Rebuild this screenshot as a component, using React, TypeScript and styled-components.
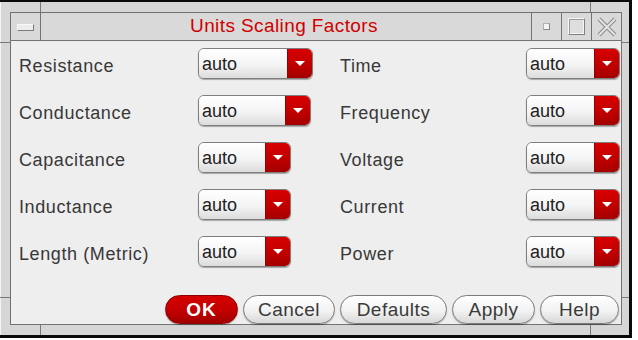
import React from 'react';
import styled, { createGlobalStyle } from 'styled-components';

const GlobalStyle = createGlobalStyle`
  html, body {
    margin: 0;
    padding: 0;
    background: #ffffff;
  }
  body {
    font-family: "Liberation Sans", Arial, sans-serif;
  }
`;

const Window = styled.div`
  position: relative;
  box-sizing: border-box;
  width: 632px;
  height: 338px;
  padding: 10px 7px 10px 10px;
  background: #d6d6d6;
  border-top: 2px solid #0a0a0a;
  border-right: 3px solid #0a0a0a;
  border-bottom: 3px solid #0a0a0a;
  box-shadow: inset 1px 0 0 #f4f4f4;
`;

// resize handle separators on the window frame
const Tick = styled.span<{ $side: 'top' | 'bottom' | 'left' | 'right'; $at: number }>`
  position: absolute;
  background: #7a7a7a;
  ${({ $side, $at }) =>
    $side === 'top'
      ? `top: 0; left: ${$at}px; width: 1px; height: 10px;`
      : $side === 'bottom'
      ? `bottom: 0; left: ${$at}px; width: 1px; height: 10px;`
      : $side === 'left'
      ? `left: 0; top: ${$at}px; width: 10px; height: 1px;`
      : `right: 0; top: ${$at}px; width: 7px; height: 1px;`}
`;

const Inner = styled.div`
  box-sizing: border-box;
  height: 100%;
  display: flex;
  flex-direction: column;
  border: 1px solid #727272;
`;

const TitleBar = styled.div`
  display: flex;
  height: 27px;
  background: #d9d9d9;
  border-bottom: 1px solid #727272;
`;

const MenuBox = styled.div`
  width: 29px;
  display: flex;
  align-items: center;
  justify-content: center;
  border-right: 1px solid #727272;
`;

const MenuBar = styled.div`
  width: 15px;
  height: 5px;
  background: #ececec;
  border: 1px solid #f8f8f8;
  border-right-color: #7a7a7a;
  border-bottom-color: #7a7a7a;
  margin-top: 1px;
`;

const Title = styled.div`
  flex: 1;
  text-align: center;
  color: #d00000;
  font-size: 19px;
  line-height: 25px;
  letter-spacing: 0.4px;
  padding-right: 4px;
`;

const WinButton = styled.div`
  width: 29px;
  display: flex;
  align-items: center;
  justify-content: center;
  border-left: 1px solid #727272;
`;

const MinDot = styled.div`
  width: 5px;
  height: 5px;
  background: #f4f4f4;
  border: 1px solid #8a8a8a;
  border-top-color: #b0b0b0;
  border-left-color: #b0b0b0;
`;

const MaxBox = styled.div`
  width: 15px;
  height: 15px;
  background: #dedede;
  border: 1px solid #f6f6f6;
  border-right-color: #808080;
  border-bottom-color: #808080;
  box-shadow: inset 1px 1px 0 #9a9a9a, inset -1px -1px 0 #f6f6f6;
`;

const Content = styled.div`
  flex: 1;
  display: flex;
  flex-direction: column;
  background: #eeeeee;
  padding: 7px 2px 0 8px;
`;

const Grid = styled.div`
  display: grid;
  grid-template-columns: 179px 142px 186px 1fr;
  grid-auto-rows: 31px;
  row-gap: 16px;
`;

const Label = styled.div`
  font-size: 18px;
  letter-spacing: 0.6px;
  color: #383838;
  padding-top: 6px;
  line-height: 25px;
  white-space: nowrap;
`;

const Combo = styled.div<{ $width: number }>`
  box-sizing: border-box;
  width: ${({ $width }) => $width}px;
  height: 31px;
  display: flex;
  border: 1px solid #7e7e7e;
  border-radius: 6px;
  overflow: hidden;
  box-shadow: 0 1px 1px rgba(0, 0, 0, 0.3);
`;

const ComboValue = styled.div`
  flex: 1;
  background: linear-gradient(#ffffff, #f4f4f4 55%, #dcdcdc);
  font-size: 18px;
  color: #1e1e1e;
  padding: 1px 0 0 3px;
  line-height: 28px;
`;

const ComboArrow = styled.div`
  width: 24px;
  display: flex;
  align-items: center;
  justify-content: center;
  background: linear-gradient(#d80000, #c00000 55%, #a40000);
  border-left: 1px solid #9a0000;

  &::after {
    content: '';
    width: 0;
    height: 0;
    border-left: 5px solid transparent;
    border-right: 5px solid transparent;
    border-top: 5px solid #ffffff;
  }
`;

const ButtonRow = styled.div`
  margin-top: auto;
  display: flex;
  justify-content: flex-end;
  gap: 5px;
`;

const Button = styled.button<{ $width: number; $primary?: boolean }>`
  box-sizing: border-box;
  width: ${({ $width }) => $width}px;
  height: 29px;
  padding: 0;
  border-radius: 15px;
  font-family: "Liberation Sans", Arial, sans-serif;
  font-size: 19px;
  line-height: 27px;
  letter-spacing: ${({ $primary }) => ($primary ? '1px' : '0.5px')};
  font-weight: ${({ $primary }) => ($primary ? 'bold' : 'normal')};
  color: ${({ $primary }) => ($primary ? '#ffffff' : '#3a3a3a')};
  border: 1px solid ${({ $primary }) => ($primary ? '#8e0000' : '#7c7c7c')};
  background: ${({ $primary }) =>
    $primary
      ? 'linear-gradient(#d60000, #c20000 55%, #a20000)'
      : 'linear-gradient(#ffffff, #f2f2f2 55%, #d8d8d8)'};
  box-shadow: 0 1px 1px rgba(0, 0, 0, 0.3);
`;

const CloseIcon = () => (
  <svg width="20" height="20" viewBox="0 0 20 20">
    <path d="M2 2 L18 18 M18 2 L2 18" stroke="#8a8a8a" strokeWidth="4" fill="none" />
    <path d="M2 2 L18 18 M18 2 L2 18" stroke="#e4e4e4" strokeWidth="2" fill="none" />
  </svg>
);

const rows: [string, number, string, number][] = [
  ['Resistance', 115, 'Time', 94],
  ['Conductance', 113, 'Frequency', 94],
  ['Capacitance', 93, 'Voltage', 94],
  ['Inductance', 93, 'Current', 94],
  ['Length (Metric)', 93, 'Power', 94],
];

const Select = ({ width }: { width: number }) => (
  <Combo $width={width}>
    <ComboValue>auto</ComboValue>
    <ComboArrow />
  </Combo>
);

const App = () => {
  return (
    <>
      <GlobalStyle />
      <Window>
        <Tick $side="top" $at={40} />
        <Tick $side="top" $at={590} />
        <Tick $side="bottom" $at={40} />
        <Tick $side="bottom" $at={590} />
        <Tick $side="left" $at={40} />
        <Tick $side="left" $at={295} />
        <Tick $side="right" $at={40} />
        <Tick $side="right" $at={295} />
        <Inner>
          <TitleBar>
            <MenuBox>
              <MenuBar />
            </MenuBox>
            <Title>Units Scaling Factors</Title>
            <WinButton>
              <MinDot />
            </WinButton>
            <WinButton>
              <MaxBox />
            </WinButton>
            <WinButton>
              <CloseIcon />
            </WinButton>
          </TitleBar>
          <Content>
            <Grid>
              {rows.map(([left, lw, right, rw]) => (
                <React.Fragment key={left}>
                  <Label>{left}</Label>
                  <Select width={lw} />
                  <Label>{right}</Label>
                  <Select width={rw} />
                </React.Fragment>
              ))}
            </Grid>
            <ButtonRow>
              <Button $width={73} $primary>OK</Button>
              <Button $width={92}>Cancel</Button>
              <Button $width={107}>Defaults</Button>
              <Button $width={83}>Apply</Button>
              <Button $width={79}>Help</Button>
            </ButtonRow>
          </Content>
        </Inner>
      </Window>
    </>
  );
};

export default App;
